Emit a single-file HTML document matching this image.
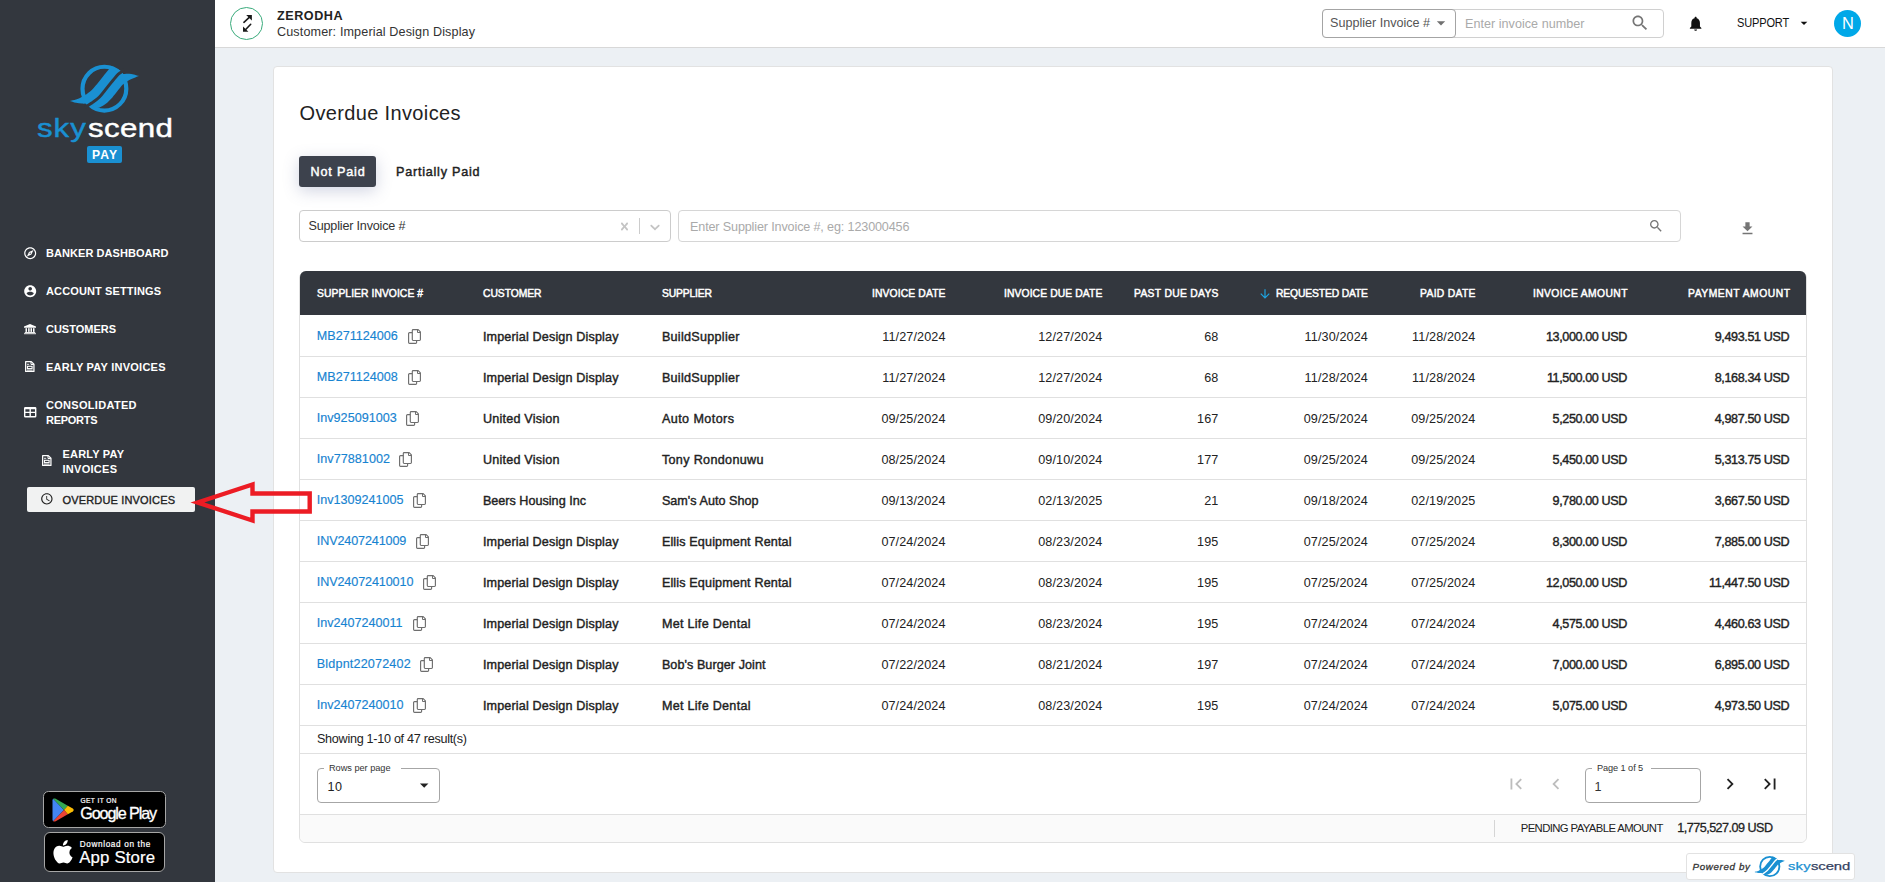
<!DOCTYPE html>
<html lang="en">
<head>
<meta charset="utf-8">
<title>Overdue Invoices</title>
<style>
html,body{margin:0;padding:0;background:#fff;}
body{width:1888px;height:882px;overflow:hidden;position:relative;font-family:"Liberation Sans",sans-serif;}
#app{position:absolute;left:0;top:0;width:1888px;height:882px;overflow:hidden;}
.r{position:absolute;box-sizing:border-box;}
.t{position:absolute;white-space:pre;font-family:"Liberation Sans",sans-serif;}
svg{position:absolute;overflow:visible;}
</style>
</head>
<body>
<div id="app">
<div class="r" style="left:215px;top:48px;width:1670px;height:834px;background:#ecf0f4;"></div>
<div class="r" style="left:215px;top:0px;width:1670px;height:48px;background:#fff;border-bottom:1px solid #d8d8d8;"></div>
<div class="r" style="left:0px;top:0px;width:215px;height:882px;background:#33373e;"></div>
<div class="r" style="left:273px;top:66px;width:1560px;height:807px;background:#fff;border:1px solid #e2e2e2;border-radius:4px;"></div>
<div class="r" style="left:230.1px;top:7px;width:33px;height:33px;border:1.600px solid #3aab7c;border-radius:50%;"></div>
<svg style="left:226px;top:3px;" width="40" height="40" viewBox="226 3 40 40"><g fill="#1a1a1a" stroke="none"><path d="M246.2 15H251.85V20.5Z"/><path d="M243 26.600V31.800H248.400Z"/></g><g stroke="#1a1a1a" stroke-width="1.600" fill="none" stroke-linecap="round"><path d="M243.900 22.300L249.800 16.900"/><path d="M250.700 24.300L245.200 30"/></g></svg>
<div class="r" style="left:1322px;top:9px;width:342px;height:29px;border:1px solid #d0d0d0;border-radius:4px;background:#fff;"></div>
<div class="r" style="left:1322px;top:9px;width:134px;height:29px;border:1px solid #a4a4a4;border-radius:4px;background:#fff;"></div>
<svg style="left:1431.2px;top:12.6px;" width="20" height="20" viewBox="0 0 24 24"><path d="M7 10l5 5 5-5z" fill="#707070"/></svg>
<svg style="left:1630px;top:13px;" width="20" height="20" viewBox="0 0 24 24"><path d="M15.5 14h-.79l-.28-.27C15.41 12.59 16 11.11 16 9.5 16 5.91 13.09 3 9.5 3S3 5.91 3 9.5 5.91 16 9.5 16c1.61 0 3.09-.59 4.23-1.57l.27.28v.79l5 4.99L20.49 19l-4.99-5zm-6 0C7.01 14 5 11.99 5 9.5S7.01 5 9.5 5 14 7.01 14 9.5 11.99 14 9.5 14z" fill="#757575"/></svg>
<svg style="left:1686.7px;top:14.9px;" width="17.25" height="17.25" viewBox="0 0 24 24"><path d="M12 22c1.1 0 2-.9 2-2h-4c0 1.1.89 2 2 2zm6-6v-5c0-3.07-1.64-5.64-4.5-6.32V4c0-.83-.67-1.5-1.5-1.5s-1.5.67-1.5 1.5v.68C7.63 5.36 6 7.92 6 11v5l-2 2v1h16v-1l-2-2z" fill="#111"/></svg>
<svg style="left:1796.3px;top:15.3px;" width="16" height="16" viewBox="0 0 24 24"><path d="M7 10l5 5 5-5z" fill="#111"/></svg>
<div class="r" style="left:1834px;top:9.5px;width:27px;height:27px;background:#00a8e8;border-radius:50%;"></div>
<svg style="left:64px;top:58px;" width="80" height="60" viewBox="64 58 80 60"><circle cx="104.4" cy="88.63" r="21.9" fill="none" stroke="#1a90d2" stroke-width="4.2"/><path d="M69.80,101.00C70.83,100.77 74.30,100.12 76.00,99.60C77.70,99.08 78.82,98.47 80.00,97.90C81.18,97.33 82.20,96.68 83.10,96.20C84.00,95.72 84.47,95.60 85.40,95.00C86.33,94.40 87.32,93.78 88.70,92.60C90.08,91.42 91.73,90.05 93.70,87.90C95.67,85.75 98.58,82.05 100.50,79.70C102.42,77.35 103.83,75.50 105.20,73.80C106.57,72.10 108.12,70.22 108.70,69.50L110.5,65.8L121.2,71L120.80,72.30C120.13,72.84 118.07,74.32 116.80,75.55C115.53,76.78 114.85,77.64 113.20,79.70C111.55,81.76 109.20,84.95 106.90,87.90C104.60,90.85 101.72,95.12 99.40,97.40C97.08,99.68 94.93,100.62 93.00,101.60C91.07,102.58 89.65,102.97 87.80,103.30C85.95,103.63 83.87,103.68 81.90,103.60C79.93,103.52 78.02,103.23 76.00,102.80C73.98,102.37 70.83,101.30 69.80,101.00Z" fill="#1a90d2"/><path d="M138.90,75.90C138.42,75.78 137.25,75.50 136.00,75.20C134.75,74.90 132.85,74.35 131.40,74.10C129.95,73.85 128.68,73.72 127.30,73.70C125.92,73.68 123.80,73.95 123.10,74.00L120.80,72.30C120.13,72.84 118.07,74.32 116.80,75.55C115.53,76.78 114.85,77.64 113.20,79.70C111.55,81.76 109.20,84.95 106.90,87.90C104.60,90.85 102.00,94.85 99.40,97.40C96.80,99.95 92.65,102.23 91.30,103.20L95,108L99.00,107.70C99.58,107.40 101.13,106.73 102.50,105.90C103.87,105.07 105.72,103.93 107.20,102.70C108.68,101.47 110.22,99.78 111.40,98.50C112.58,97.22 112.88,96.77 114.30,95.00C115.72,93.23 118.43,89.70 119.90,87.90C121.37,86.10 122.03,85.20 123.10,84.20C124.17,83.20 125.27,82.60 126.30,81.90C127.33,81.20 128.02,80.67 129.30,80.00C130.58,79.33 132.40,78.58 134.00,77.90C135.60,77.22 138.08,76.23 138.90,75.90Z" fill="#1a90d2"/><path d="M124.20,69.60C123.63,70.05 122.03,71.28 120.80,72.30C119.57,73.32 119.12,73.10 116.80,75.70C114.48,78.30 109.83,84.30 106.90,87.90C103.97,91.50 101.80,94.73 99.20,97.30C96.60,99.87 93.70,101.62 91.30,103.30C88.90,104.98 85.88,106.72 84.80,107.40" fill="none" stroke="#33373e" stroke-width="3"/></svg>
<div class="r" style="left:87px;top:146px;width:35px;height:17px;background:#1a90d2;border-radius:2px;"></div>
<div class="r" style="left:27px;top:487px;width:168px;height:25px;background:#f1f2f2;border-radius:2px;"></div>
<svg style="left:22.8px;top:245.5px;" width="14.4" height="14.4" viewBox="0 0 24 24"><path d="M12 2C6.48 2 2 6.48 2 12s4.48 10 10 10 10-4.48 10-10S17.52 2 12 2zm0 18c-4.41 0-8-3.59-8-8s3.59-8 8-8 8 3.59 8 8-3.59 8-8 8zm-5.500-2.500l7.510-3.490L17.500 6.500 9.990 9.990 6.500 17.500zm5.500-6.600c.61 0 1.100.49 1.100 1.100s-.49 1.100-1.100 1.100-1.100-.49-1.100-1.100.49-1.100 1.100-1.100z" fill="#fff"/></svg>
<svg style="left:22.8px;top:283.6px;" width="14.4" height="14.4" viewBox="0 0 24 24"><path d="M12 2C6.48 2 2 6.48 2 12s4.48 10 10 10 10-4.48 10-10S17.52 2 12 2zm0 3c1.66 0 3 1.34 3 3s-1.34 3-3 3-3-1.34-3-3 1.34-3 3-3zm0 14.200c-2.500 0-4.710-1.280-6-3.220.03-1.990 4-3.080 6-3.080 1.990 0 5.970 1.090 6 3.080-1.290 1.940-3.500 3.220-6 3.220z" fill="#fff"/></svg>
<svg style="left:23.75px;top:323.9px;" width="12" height="10.2" viewBox="0 0 12 10.200"><g fill="#fff"><path d="M6 0L12 2.500V3.700H0V2.500Z"/><rect x="1.500" y="4.200" width="1.500" height="3.700"/><rect x="4.100" y="4.200" width="1.500" height="3.700"/><rect x="6.500" y="4.200" width="1.500" height="3.700"/><rect x="9" y="4.200" width="1.500" height="3.700"/><rect x=".8" y="8.100" width="10.400" height="1"/><rect x="0" y="9.300" width="12" height=".9"/></g></svg>
<svg style="left:24.8px;top:360.9px;" width="9.6" height="11.1" viewBox="0 0 9.600 11.100"><g fill="none" stroke="#fff" stroke-width="1.250"><path d="M.65 .65H6.300L8.950 3.300V10.450H.65Z" stroke-linejoin="round"/><path d="M6 .8V3.500H8.800" stroke-width="1"/><rect x="2.500" y="5.300" width="4.600" height="2.300" stroke-width="1.100"/><path d="M2 3.300H4.200M2 9.100H7.600" stroke-width=".9"/></g></svg>
<svg style="left:23.75px;top:406.9px;" width="12.4" height="10.5" viewBox="0 0 12.400 10.500"><path fill-rule="evenodd" fill="#fff" d="M1.300 0H11.100A1.300 1.300 0 0 1 12.400 1.300V9.200A1.300 1.300 0 0 1 11.100 10.500H1.300A1.300 1.300 0 0 1 0 9.200V1.300A1.300 1.300 0 0 1 1.300 0ZM1.400 2.200V4.700H5.500V2.200ZM6.900 2.200V4.700H11V2.200ZM1.400 6.100V8.900H5.500V6.100ZM6.900 6.100V8.900H11V6.100Z"/></svg>
<svg style="left:41.9px;top:455px;" width="9.6" height="11.1" viewBox="0 0 9.600 11.100"><g fill="none" stroke="#fff" stroke-width="1.250"><path d="M.65 .65H6.300L8.950 3.300V10.450H.65Z" stroke-linejoin="round"/><path d="M6 .8V3.500H8.800" stroke-width="1"/><rect x="2.500" y="5.300" width="4.600" height="2.300" stroke-width="1.100"/><path d="M2 3.300H4.200M2 9.100H7.600" stroke-width=".9"/></g></svg>
<svg style="left:39.85px;top:492.35px;" width="13.7" height="13.7" viewBox="0 0 24 24"><path d="M11.990 2C6.470 2 2 6.480 2 12s4.470 10 9.990 10C17.520 22 22 17.520 22 12S17.520 2 11.990 2zM12 20c-4.420 0-8-3.580-8-8s3.580-8 8-8 8 3.580 8 8-3.580 8-8 8zm.5-13H11v6l5.250 3.150.75-1.230-4.500-2.670z" fill="#222"/></svg>
<div class="r" style="left:43px;top:791px;width:123px;height:37px;background:#000;border:1px solid #a6a6a6;border-radius:5.5px;"></div>
<svg style="left:51.5px;top:797.5px;" width="22" height="24" viewBox="0 0 22 24"><path d="M1.200 0.800 L12 12 L1.200 23.200 C0.700 22.800 0.500 22.200 0.500 21.500 V2.500 C0.500 1.800 0.700 1.200 1.200 0.800Z" fill="#4285f4"/><path d="M1.200 0.800 C1.900 0.300 2.800 0.300 3.700 0.800 L15.800 7.800 L12 12Z" fill="#34a853"/><path d="M15.800 7.800 L20.800 10.600 C22 11.300 22 12.700 20.800 13.400 L15.800 16.200 L12 12Z" fill="#fbbc04"/><path d="M1.200 23.200 C1.900 23.700 2.800 23.700 3.700 23.200 L15.800 16.200 L12 12Z" fill="#ea4335"/></svg>
<div class="r" style="left:44px;top:832px;width:121px;height:40px;background:#000;border:1px solid #a6a6a6;border-radius:6px;"></div>
<svg style="left:52.8px;top:840.2px;" width="20.5" height="23.5" viewBox="2.500 0 19.500 24"><path d="M12.152 6.896c-.948 0-2.415-1.078-3.960-1.040-2.040.027-3.910 1.183-4.961 3.014-2.117 3.675-.546 9.103 1.519 12.090 1.013 1.454 2.208 3.090 3.792 3.039 1.520-.065 2.090-.987 3.935-.987 1.831 0 2.350.987 3.960.948 1.637-.026 2.676-1.480 3.676-2.948 1.156-1.688 1.636-3.325 1.662-3.415-.039-.013-3.182-1.221-3.220-4.857-.026-3.040 2.480-4.494 2.597-4.559-1.429-2.090-3.623-2.324-4.390-2.376-2-.156-3.675 1.090-4.610 1.090zM15.530 3.830c.843-1.012 1.400-2.427 1.245-3.830-1.207.052-2.662.805-3.532 1.818-.78.896-1.454 2.338-1.273 3.714 1.338.104 2.715-.688 3.559-1.701" fill="#fff"/></svg>
<div class="r" style="left:299px;top:156px;width:77px;height:31px;background:#3d424d;border-radius:3px;box-shadow:0 4px 16px rgba(90,100,150,.28);"></div>
<div class="r" style="left:299px;top:210px;width:372px;height:32px;border:1px solid #ccc;border-radius:4px;background:#fff;"></div>
<svg style="left:617px;top:219px;" width="15" height="15" viewBox="0 0 20 20"><path d="M14.348 14.849c-0.469 0.469-1.229 0.469-1.697 0l-2.651-3.030-2.651 3.029c-0.469 0.469-1.229 0.469-1.697 0-0.469-0.469-0.469-1.229 0-1.697l2.758-3.150-2.759-3.152c-0.469-0.469-0.469-1.228 0-1.697s1.228-0.469 1.697 0l2.652 3.031 2.651-3.031c0.469-0.469 1.228-0.469 1.697 0s0.469 1.229 0 1.697l-2.758 3.152 2.758 3.150c0.469 0.469 0.469 1.229 0 1.698z" fill="#c4c4c4"/></svg>
<div class="r" style="left:639px;top:217.5px;width:1px;height:16px;background:#ccc;"></div>
<svg style="left:647.2px;top:219px;" width="16" height="16" viewBox="0 0 20 20"><path d="M4.516 7.548c0.436-0.446 1.043-0.481 1.576 0l3.908 3.747 3.908-3.747c0.533-0.481 1.141-0.446 1.574 0 0.436 0.445 0.408 1.197 0 1.615-0.406 0.418-4.695 4.502-4.695 4.502-0.217 0.223-0.502 0.335-0.787 0.335s-0.570-0.112-0.789-0.335c0 0-4.287-4.084-4.695-4.502s-0.436-1.170 0-1.615z" fill="#c4c4c4"/></svg>
<div class="r" style="left:678px;top:210px;width:1003px;height:32px;border:1px solid #d6d6d6;border-radius:4px;background:#fff;"></div>
<svg style="left:1648px;top:218px;" width="16" height="16" viewBox="0 0 24 24"><path d="M15.5 14h-.79l-.28-.27C15.41 12.59 16 11.11 16 9.5 16 5.91 13.09 3 9.5 3S3 5.91 3 9.5 5.91 16 9.5 16c1.61 0 3.09-.59 4.23-1.57l.27.28v.79l5 4.99L20.49 19l-4.99-5zm-6 0C7.01 14 5 11.99 5 9.5S7.01 5 9.5 5 14 7.01 14 9.5 11.99 14 9.5 14z" fill="#757575"/></svg>
<svg style="left:1739px;top:219.5px;" width="17" height="17" viewBox="0 0 24 24"><path d="M19 9h-4V3H9v6H5l7 7 7-7zM5 18v2h14v-2H5z" fill="#757575"/></svg>
<div class="r" style="left:299px;top:271px;width:1508px;height:572px;border:1px solid #e0e0e0;border-radius:7px 7px 6px 6px;background:#fff;"></div>
<div class="r" style="left:300px;top:271px;width:1506px;height:44px;background:#33373e;border-radius:6px 6px 0 0;"></div>
<svg style="left:1257.5px;top:286.5px;" width="14" height="14" viewBox="0 0 24 24"><path d="M20 12l-1.410-1.410L13 16.170V4h-2v12.170l-5.580-5.590L4 12l8 8 8-8z" fill="#1ea4e0"/></svg>
<svg style="left:408px;top:329.0px;" width="13" height="15" viewBox="0 0 13 15"><g fill="none" stroke="#6e6e6e" stroke-width="1.150" stroke-linejoin="round"><path d="M5.200 .6H10.200L12.400 2.800V10.600A.9 .9 0 0 1 11.500 11.500H5.200A.9 .9 0 0 1 4.300 10.600V1.500A.9 .9 0 0 1 5.200 .6Z"/><path d="M9.500 .9V3.500H12.200" stroke-width="1"/><path d="M4.300 3.600H1.500A.9 .9 0 0 0 .6 4.500V13.400A.9 .9 0 0 0 1.500 14.300H7.700A.9 .9 0 0 0 8.600 13.400V11.600"/></g></svg>
<div class="r" style="left:300px;top:356px;width:1506px;height:1px;background:#e0e0e0;"></div>
<svg style="left:408px;top:370.0px;" width="13" height="15" viewBox="0 0 13 15"><g fill="none" stroke="#6e6e6e" stroke-width="1.150" stroke-linejoin="round"><path d="M5.200 .6H10.200L12.400 2.800V10.600A.9 .9 0 0 1 11.500 11.500H5.200A.9 .9 0 0 1 4.300 10.600V1.500A.9 .9 0 0 1 5.200 .6Z"/><path d="M9.500 .9V3.500H12.200" stroke-width="1"/><path d="M4.300 3.600H1.500A.9 .9 0 0 0 .6 4.500V13.400A.9 .9 0 0 0 1.500 14.300H7.700A.9 .9 0 0 0 8.600 13.400V11.600"/></g></svg>
<div class="r" style="left:300px;top:397px;width:1506px;height:1px;background:#e0e0e0;"></div>
<svg style="left:405.8px;top:411.0px;" width="13" height="15" viewBox="0 0 13 15"><g fill="none" stroke="#6e6e6e" stroke-width="1.150" stroke-linejoin="round"><path d="M5.200 .6H10.200L12.400 2.800V10.600A.9 .9 0 0 1 11.500 11.500H5.200A.9 .9 0 0 1 4.300 10.600V1.500A.9 .9 0 0 1 5.200 .6Z"/><path d="M9.500 .9V3.500H12.200" stroke-width="1"/><path d="M4.300 3.600H1.500A.9 .9 0 0 0 .6 4.500V13.400A.9 .9 0 0 0 1.500 14.300H7.700A.9 .9 0 0 0 8.600 13.400V11.600"/></g></svg>
<div class="r" style="left:300px;top:438px;width:1506px;height:1px;background:#e0e0e0;"></div>
<svg style="left:398.9px;top:452.0px;" width="13" height="15" viewBox="0 0 13 15"><g fill="none" stroke="#6e6e6e" stroke-width="1.150" stroke-linejoin="round"><path d="M5.200 .6H10.200L12.400 2.800V10.600A.9 .9 0 0 1 11.500 11.500H5.200A.9 .9 0 0 1 4.300 10.600V1.500A.9 .9 0 0 1 5.200 .6Z"/><path d="M9.500 .9V3.500H12.200" stroke-width="1"/><path d="M4.300 3.600H1.500A.9 .9 0 0 0 .6 4.500V13.400A.9 .9 0 0 0 1.500 14.300H7.700A.9 .9 0 0 0 8.600 13.400V11.600"/></g></svg>
<div class="r" style="left:300px;top:479px;width:1506px;height:1px;background:#e0e0e0;"></div>
<svg style="left:413px;top:493.0px;" width="13" height="15" viewBox="0 0 13 15"><g fill="none" stroke="#6e6e6e" stroke-width="1.150" stroke-linejoin="round"><path d="M5.200 .6H10.200L12.400 2.800V10.600A.9 .9 0 0 1 11.500 11.500H5.200A.9 .9 0 0 1 4.300 10.600V1.500A.9 .9 0 0 1 5.200 .6Z"/><path d="M9.500 .9V3.500H12.200" stroke-width="1"/><path d="M4.300 3.600H1.500A.9 .9 0 0 0 .6 4.500V13.400A.9 .9 0 0 0 1.500 14.300H7.700A.9 .9 0 0 0 8.600 13.400V11.600"/></g></svg>
<div class="r" style="left:300px;top:520px;width:1506px;height:1px;background:#e0e0e0;"></div>
<svg style="left:415.9px;top:534.0px;" width="13" height="15" viewBox="0 0 13 15"><g fill="none" stroke="#6e6e6e" stroke-width="1.150" stroke-linejoin="round"><path d="M5.200 .6H10.200L12.400 2.800V10.600A.9 .9 0 0 1 11.500 11.500H5.200A.9 .9 0 0 1 4.300 10.600V1.500A.9 .9 0 0 1 5.200 .6Z"/><path d="M9.500 .9V3.500H12.200" stroke-width="1"/><path d="M4.300 3.600H1.500A.9 .9 0 0 0 .6 4.500V13.400A.9 .9 0 0 0 1.500 14.300H7.700A.9 .9 0 0 0 8.600 13.400V11.600"/></g></svg>
<div class="r" style="left:300px;top:561px;width:1506px;height:1px;background:#e0e0e0;"></div>
<svg style="left:422.8px;top:575.0px;" width="13" height="15" viewBox="0 0 13 15"><g fill="none" stroke="#6e6e6e" stroke-width="1.150" stroke-linejoin="round"><path d="M5.200 .6H10.200L12.400 2.800V10.600A.9 .9 0 0 1 11.500 11.500H5.200A.9 .9 0 0 1 4.300 10.600V1.500A.9 .9 0 0 1 5.200 .6Z"/><path d="M9.500 .9V3.500H12.200" stroke-width="1"/><path d="M4.300 3.600H1.500A.9 .9 0 0 0 .6 4.500V13.400A.9 .9 0 0 0 1.500 14.300H7.700A.9 .9 0 0 0 8.600 13.400V11.600"/></g></svg>
<div class="r" style="left:300px;top:602px;width:1506px;height:1px;background:#e0e0e0;"></div>
<svg style="left:413px;top:616.0px;" width="13" height="15" viewBox="0 0 13 15"><g fill="none" stroke="#6e6e6e" stroke-width="1.150" stroke-linejoin="round"><path d="M5.200 .6H10.200L12.400 2.800V10.600A.9 .9 0 0 1 11.500 11.500H5.200A.9 .9 0 0 1 4.300 10.600V1.500A.9 .9 0 0 1 5.200 .6Z"/><path d="M9.500 .9V3.500H12.200" stroke-width="1"/><path d="M4.300 3.600H1.500A.9 .9 0 0 0 .6 4.500V13.400A.9 .9 0 0 0 1.500 14.300H7.700A.9 .9 0 0 0 8.600 13.400V11.600"/></g></svg>
<div class="r" style="left:300px;top:643px;width:1506px;height:1px;background:#e0e0e0;"></div>
<svg style="left:419.9px;top:657.0px;" width="13" height="15" viewBox="0 0 13 15"><g fill="none" stroke="#6e6e6e" stroke-width="1.150" stroke-linejoin="round"><path d="M5.200 .6H10.200L12.400 2.800V10.600A.9 .9 0 0 1 11.500 11.500H5.200A.9 .9 0 0 1 4.300 10.600V1.500A.9 .9 0 0 1 5.200 .6Z"/><path d="M9.500 .9V3.500H12.200" stroke-width="1"/><path d="M4.300 3.600H1.500A.9 .9 0 0 0 .6 4.500V13.400A.9 .9 0 0 0 1.500 14.300H7.700A.9 .9 0 0 0 8.600 13.400V11.600"/></g></svg>
<div class="r" style="left:300px;top:684px;width:1506px;height:1px;background:#e0e0e0;"></div>
<svg style="left:413px;top:698.0px;" width="13" height="15" viewBox="0 0 13 15"><g fill="none" stroke="#6e6e6e" stroke-width="1.150" stroke-linejoin="round"><path d="M5.200 .6H10.200L12.400 2.800V10.600A.9 .9 0 0 1 11.500 11.500H5.200A.9 .9 0 0 1 4.300 10.600V1.500A.9 .9 0 0 1 5.200 .6Z"/><path d="M9.500 .9V3.500H12.200" stroke-width="1"/><path d="M4.300 3.600H1.500A.9 .9 0 0 0 .6 4.500V13.400A.9 .9 0 0 0 1.500 14.300H7.700A.9 .9 0 0 0 8.600 13.400V11.600"/></g></svg>
<div class="r" style="left:300px;top:725px;width:1506px;height:1px;background:#e0e0e0;"></div>
<div class="r" style="left:300px;top:753px;width:1506px;height:1px;background:#e0e0e0;"></div>
<div class="r" style="left:317px;top:768px;width:123px;height:35px;border:1px solid #a6a6a6;border-radius:4px;"></div>
<div class="r" style="left:324px;top:766px;width:77px;height:5px;background:#fff;"></div>
<svg style="left:413.75px;top:775.4px;" width="20.4" height="20.4" viewBox="0 0 24 24"><path d="M7 10l5 5 5-5z" fill="#222"/></svg>
<svg style="left:1505.2px;top:773.2px;" width="22" height="22" viewBox="0 0 24 24"><path d="M18.410 16.590L13.820 12l4.590-4.590L17 6l-6 6 6 6zM6 6h2v12H6z" fill="#bdbdbd"/></svg>
<svg style="left:1545px;top:773.2px;" width="22" height="22" viewBox="0 0 24 24"><path d="M15.410 7.410L14 6l-6 6 6 6 1.410-1.410L10.830 12z" fill="#bdbdbd"/></svg>
<div class="r" style="left:1585px;top:768px;width:116px;height:35px;border:1px solid #a6a6a6;border-radius:4px;"></div>
<div class="r" style="left:1592px;top:766px;width:59px;height:5px;background:#fff;"></div>
<svg style="left:1719px;top:773.2px;" width="22" height="22" viewBox="0 0 24 24"><path d="M10 6L8.590 7.410 13.170 12l-4.580 4.590L10 18l6-6z" fill="#222"/></svg>
<svg style="left:1759px;top:773.2px;" width="22" height="22" viewBox="0 0 24 24"><path d="M5.590 7.410L10.180 12l-4.590 4.590L7 18l6-6-6-6zM16 6h2v12h-2z" fill="#222"/></svg>
<div class="r" style="left:300px;top:814px;width:1506px;height:28px;background:#fafafa;border-top:1px solid #e0e0e0;border-radius:0 0 6px 6px;"></div>
<div class="r" style="left:1494px;top:820px;width:1px;height:17px;background:#d5d5d5;"></div>
<div class="r" style="left:1685.7px;top:853px;width:169.3px;height:27px;background:#fff;border:1px solid #e2e2e2;border-radius:3px;"></div>
<svg style="left:1752.45px;top:852.7px;" width="35.2" height="26.4" viewBox="64 58 80 60"><circle cx="104.4" cy="88.63" r="21.9" fill="none" stroke="#1a90d2" stroke-width="4.2"/><path d="M69.80,101.00C70.83,100.77 74.30,100.12 76.00,99.60C77.70,99.08 78.82,98.47 80.00,97.90C81.18,97.33 82.20,96.68 83.10,96.20C84.00,95.72 84.47,95.60 85.40,95.00C86.33,94.40 87.32,93.78 88.70,92.60C90.08,91.42 91.73,90.05 93.70,87.90C95.67,85.75 98.58,82.05 100.50,79.70C102.42,77.35 103.83,75.50 105.20,73.80C106.57,72.10 108.12,70.22 108.70,69.50L110.5,65.8L121.2,71L120.80,72.30C120.13,72.84 118.07,74.32 116.80,75.55C115.53,76.78 114.85,77.64 113.20,79.70C111.55,81.76 109.20,84.95 106.90,87.90C104.60,90.85 101.72,95.12 99.40,97.40C97.08,99.68 94.93,100.62 93.00,101.60C91.07,102.58 89.65,102.97 87.80,103.30C85.95,103.63 83.87,103.68 81.90,103.60C79.93,103.52 78.02,103.23 76.00,102.80C73.98,102.37 70.83,101.30 69.80,101.00Z" fill="#1a90d2"/><path d="M138.90,75.90C138.42,75.78 137.25,75.50 136.00,75.20C134.75,74.90 132.85,74.35 131.40,74.10C129.95,73.85 128.68,73.72 127.30,73.70C125.92,73.68 123.80,73.95 123.10,74.00L120.80,72.30C120.13,72.84 118.07,74.32 116.80,75.55C115.53,76.78 114.85,77.64 113.20,79.70C111.55,81.76 109.20,84.95 106.90,87.90C104.60,90.85 102.00,94.85 99.40,97.40C96.80,99.95 92.65,102.23 91.30,103.20L95,108L99.00,107.70C99.58,107.40 101.13,106.73 102.50,105.90C103.87,105.07 105.72,103.93 107.20,102.70C108.68,101.47 110.22,99.78 111.40,98.50C112.58,97.22 112.88,96.77 114.30,95.00C115.72,93.23 118.43,89.70 119.90,87.90C121.37,86.10 122.03,85.20 123.10,84.20C124.17,83.20 125.27,82.60 126.30,81.90C127.33,81.20 128.02,80.67 129.30,80.00C130.58,79.33 132.40,78.58 134.00,77.90C135.60,77.22 138.08,76.23 138.90,75.90Z" fill="#1a90d2"/><path d="M124.20,69.60C123.63,70.05 122.03,71.28 120.80,72.30C119.57,73.32 119.12,73.10 116.80,75.70C114.48,78.30 109.83,84.30 106.90,87.90C103.97,91.50 101.80,94.73 99.20,97.30C96.60,99.87 93.70,101.62 91.30,103.30C88.90,104.98 85.88,106.72 84.80,107.40" fill="none" stroke="#fff" stroke-width="3"/></svg>
<svg style="left:190px;top:475px;" width="130" height="55" viewBox="190 475 130 55"><path d="M197.5 502.5L252.500 484.500V493.500H309.700V511.500H252.500V520.500Z" fill="none" stroke="#ec1c24" stroke-width="4.400" stroke-linejoin="miter"/></svg>
<span class="t" style="left:277.00px;top:9px;font-size:12.6px;line-height:14px;height:14px;color:#222;font-weight:700;letter-spacing:0.553px;">ZERODHA</span>
<span class="t" style="left:277.00px;top:25px;font-size:12.6px;line-height:14px;height:14px;color:#333;letter-spacing:0.129px;">Customer: Imperial Design Display</span>
<span class="t" style="left:1330.00px;top:16px;font-size:12.6px;line-height:14px;height:14px;color:#555;letter-spacing:-0.007px;">Supplier Invoice #</span>
<span class="t" style="left:1465.00px;top:17px;font-size:12.6px;line-height:14px;height:14px;color:#aaa;letter-spacing:0.025px;">Enter invoice number</span>
<span class="t" style="left:1736.60px;top:16px;font-size:12px;line-height:14px;height:14px;color:#111;letter-spacing:-0.176px;transform:scaleX(0.92);transform-origin:0 50%;">SUPPORT</span>
<span class="t" style="left:1842.10px;top:14px;font-size:16.4px;line-height:18px;height:18px;color:#fff;">N</span>
<span class="t" style="left:37.30px;top:114px;font-size:25.6px;line-height:28px;height:28px;color:#1a90d2;letter-spacing:0.805px;-webkit-text-stroke:0.45px #1a90d2;transform:scaleX(1.22);transform-origin:0 50%;">sky</span>
<span class="t" style="left:88.10px;top:114px;font-size:25.6px;line-height:28px;height:28px;color:#fff;letter-spacing:0.303px;-webkit-text-stroke:0.45px #fff;transform:scaleX(1.22);transform-origin:0 50%;">scend</span>
<span class="t" style="left:92.20px;top:148px;font-size:11.9px;line-height:14px;height:14px;color:#fff;font-weight:700;letter-spacing:1.111px;transform:scaleX(1.02);transform-origin:0 50%;">PAY</span>
<span class="t" style="left:46.00px;top:247px;font-size:11px;line-height:12px;height:12px;color:#fff;font-weight:700;letter-spacing:0.058px;">BANKER DASHBOARD</span>
<span class="t" style="left:46.00px;top:285px;font-size:11px;line-height:12px;height:12px;color:#fff;font-weight:700;letter-spacing:0.129px;">ACCOUNT SETTINGS</span>
<span class="t" style="left:46.00px;top:323px;font-size:11px;line-height:12px;height:12px;color:#fff;font-weight:700;letter-spacing:-0.012px;">CUSTOMERS</span>
<span class="t" style="left:46.00px;top:361px;font-size:11px;line-height:12px;height:12px;color:#fff;font-weight:700;letter-spacing:0.244px;">EARLY PAY INVOICES</span>
<span class="t" style="left:46.00px;top:399px;font-size:11px;line-height:12px;height:12px;color:#fff;font-weight:700;letter-spacing:0.301px;">CONSOLIDATED</span>
<span class="t" style="left:46.00px;top:414px;font-size:11px;line-height:12px;height:12px;color:#fff;font-weight:700;letter-spacing:-0.281px;">REPORTS</span>
<span class="t" style="left:62.50px;top:448px;font-size:11px;line-height:12px;height:12px;color:#fff;font-weight:700;letter-spacing:0.197px;">EARLY PAY</span>
<span class="t" style="left:62.50px;top:463px;font-size:11px;line-height:12px;height:12px;color:#fff;font-weight:700;letter-spacing:0.275px;">INVOICES</span>
<span class="t" style="left:62.50px;top:494px;font-size:11px;line-height:12px;height:12px;color:#222;letter-spacing:0.165px;-webkit-text-stroke:0.35px #222;">OVERDUE INVOICES</span>
<span class="t" style="left:80.50px;top:797px;font-size:6.6px;line-height:7px;height:7px;color:#fff;letter-spacing:0.408px;-webkit-text-stroke:0.2px #fff;">GET IT ON</span>
<span class="t" style="left:80.20px;top:804px;font-size:16.2px;line-height:18px;height:18px;color:#fff;letter-spacing:-1.119px;-webkit-text-stroke:0.3px #fff;">Google Play</span>
<span class="t" style="left:79.70px;top:840px;font-size:8.2px;line-height:9px;height:9px;color:#fff;letter-spacing:0.646px;-webkit-text-stroke:0.2px #fff;">Download on the</span>
<span class="t" style="left:79.20px;top:848px;font-size:16.8px;line-height:19px;height:19px;color:#fff;letter-spacing:0.170px;-webkit-text-stroke:0.2px #fff;">App Store</span>
<span class="t" style="left:299.50px;top:102px;font-size:20px;line-height:22px;height:22px;color:#222;letter-spacing:0.357px;">Overdue Invoices</span>
<span class="t" style="left:310.50px;top:165px;font-size:12.6px;line-height:14px;height:14px;color:#fff;letter-spacing:0.841px;-webkit-text-stroke:0.45px #fff;">Not Paid</span>
<span class="t" style="left:396.00px;top:165px;font-size:12.6px;line-height:14px;height:14px;color:#222;letter-spacing:0.769px;-webkit-text-stroke:0.45px #222;">Partially Paid</span>
<span class="t" style="left:308.50px;top:219px;font-size:12.6px;line-height:14px;height:14px;color:#333;letter-spacing:-0.184px;">Supplier Invoice #</span>
<span class="t" style="left:690.00px;top:220px;font-size:12.6px;line-height:14px;height:14px;color:#aaa;letter-spacing:-0.139px;">Enter Supplier Invoice #, eg: 123000456</span>
<span class="t" style="left:317.00px;top:287px;font-size:11.1px;line-height:12px;height:12px;color:#fff;letter-spacing:0.068px;-webkit-text-stroke:0.5px #fff;transform:scaleX(0.93);transform-origin:0 50%;">SUPPLIER INVOICE #</span>
<span class="t" style="left:483.00px;top:287px;font-size:11.1px;line-height:12px;height:12px;color:#fff;letter-spacing:-0.054px;-webkit-text-stroke:0.5px #fff;transform:scaleX(0.93);transform-origin:0 50%;">CUSTOMER</span>
<span class="t" style="left:662.20px;top:287px;font-size:11.1px;line-height:12px;height:12px;color:#fff;letter-spacing:-0.159px;-webkit-text-stroke:0.5px #fff;transform:scaleX(0.93);transform-origin:0 50%;">SUPPLIER</span>
<span class="t" style="left:871.70px;top:287px;font-size:11.1px;line-height:12px;height:12px;color:#fff;letter-spacing:0.142px;-webkit-text-stroke:0.5px #fff;transform:scaleX(0.93);transform-origin:0 50%;">INVOICE DATE</span>
<span class="t" style="left:1003.70px;top:287px;font-size:11.1px;line-height:12px;height:12px;color:#fff;letter-spacing:0.115px;-webkit-text-stroke:0.5px #fff;transform:scaleX(0.93);transform-origin:0 50%;">INVOICE DUE DATE</span>
<span class="t" style="left:1133.50px;top:287px;font-size:11.1px;line-height:12px;height:12px;color:#fff;letter-spacing:0.327px;-webkit-text-stroke:0.5px #fff;transform:scaleX(0.93);transform-origin:0 50%;">PAST DUE DAYS</span>
<span class="t" style="left:1275.50px;top:287px;font-size:11.1px;line-height:12px;height:12px;color:#fff;letter-spacing:-0.151px;-webkit-text-stroke:0.5px #fff;transform:scaleX(0.93);transform-origin:0 50%;">REQUESTED DATE</span>
<span class="t" style="left:1419.50px;top:287px;font-size:11.1px;line-height:12px;height:12px;color:#fff;letter-spacing:0.344px;-webkit-text-stroke:0.5px #fff;transform:scaleX(0.93);transform-origin:0 50%;">PAID DATE</span>
<span class="t" style="left:1532.50px;top:287px;font-size:11.1px;line-height:12px;height:12px;color:#fff;letter-spacing:0.420px;-webkit-text-stroke:0.5px #fff;transform:scaleX(0.93);transform-origin:0 50%;">INVOICE AMOUNT</span>
<span class="t" style="left:1687.50px;top:287px;font-size:11.1px;line-height:12px;height:12px;color:#fff;letter-spacing:0.565px;-webkit-text-stroke:0.5px #fff;transform:scaleX(0.93);transform-origin:0 50%;">PAYMENT AMOUNT</span>
<span class="t" style="left:316.80px;top:329px;font-size:12.6px;line-height:14px;height:14px;color:#1783d1;letter-spacing:-0.010px;-webkit-text-stroke:0.15px #1783d1;">MB271124006</span>
<span class="t" style="left:482.90px;top:330px;font-size:12.6px;line-height:14px;height:14px;color:#222;letter-spacing:0.150px;-webkit-text-stroke:0.4px #222;">Imperial Design Display</span>
<span class="t" style="left:661.90px;top:330px;font-size:12.6px;line-height:14px;height:14px;color:#222;letter-spacing:0.282px;-webkit-text-stroke:0.4px #222;">BuildSupplier</span>
<span class="t" style="left:882.31px;top:330px;font-size:12.6px;line-height:14px;height:14px;color:#222;letter-spacing:0.120px;">11/27/2024</span>
<span class="t" style="left:1038.19px;top:330px;font-size:12.6px;line-height:14px;height:14px;color:#222;letter-spacing:0.120px;">12/27/2024</span>
<span class="t" style="left:1204.16px;top:330px;font-size:12.6px;line-height:14px;height:14px;color:#222;letter-spacing:0.120px;">68</span>
<span class="t" style="left:1304.61px;top:330px;font-size:12.6px;line-height:14px;height:14px;color:#222;letter-spacing:0.120px;">11/30/2024</span>
<span class="t" style="left:1412.11px;top:330px;font-size:12.6px;line-height:14px;height:14px;color:#222;letter-spacing:0.120px;">11/28/2024</span>
<span class="t" style="left:1545.97px;top:330px;font-size:12.6px;line-height:14px;height:14px;color:#222;letter-spacing:-0.400px;-webkit-text-stroke:0.4px #222;">13,000.00 USD</span>
<span class="t" style="left:1714.78px;top:330px;font-size:12.6px;line-height:14px;height:14px;color:#222;letter-spacing:-0.400px;-webkit-text-stroke:0.4px #222;">9,493.51 USD</span>
<span class="t" style="left:316.80px;top:370px;font-size:12.6px;line-height:14px;height:14px;color:#1783d1;letter-spacing:-0.010px;-webkit-text-stroke:0.15px #1783d1;">MB271124008</span>
<span class="t" style="left:482.90px;top:371px;font-size:12.6px;line-height:14px;height:14px;color:#222;letter-spacing:0.150px;-webkit-text-stroke:0.4px #222;">Imperial Design Display</span>
<span class="t" style="left:661.90px;top:371px;font-size:12.6px;line-height:14px;height:14px;color:#222;letter-spacing:0.282px;-webkit-text-stroke:0.4px #222;">BuildSupplier</span>
<span class="t" style="left:882.31px;top:371px;font-size:12.6px;line-height:14px;height:14px;color:#222;letter-spacing:0.120px;">11/27/2024</span>
<span class="t" style="left:1038.19px;top:371px;font-size:12.6px;line-height:14px;height:14px;color:#222;letter-spacing:0.120px;">12/27/2024</span>
<span class="t" style="left:1204.16px;top:371px;font-size:12.6px;line-height:14px;height:14px;color:#222;letter-spacing:0.120px;">68</span>
<span class="t" style="left:1304.61px;top:371px;font-size:12.6px;line-height:14px;height:14px;color:#222;letter-spacing:0.120px;">11/28/2024</span>
<span class="t" style="left:1412.11px;top:371px;font-size:12.6px;line-height:14px;height:14px;color:#222;letter-spacing:0.120px;">11/28/2024</span>
<span class="t" style="left:1546.91px;top:371px;font-size:12.6px;line-height:14px;height:14px;color:#222;letter-spacing:-0.400px;-webkit-text-stroke:0.4px #222;">11,500.00 USD</span>
<span class="t" style="left:1714.78px;top:371px;font-size:12.6px;line-height:14px;height:14px;color:#222;letter-spacing:-0.400px;-webkit-text-stroke:0.4px #222;">8,168.34 USD</span>
<span class="t" style="left:316.80px;top:411px;font-size:12.6px;line-height:14px;height:14px;color:#1783d1;letter-spacing:0.005px;-webkit-text-stroke:0.15px #1783d1;">Inv925091003</span>
<span class="t" style="left:482.90px;top:412px;font-size:12.6px;line-height:14px;height:14px;color:#222;letter-spacing:0.218px;-webkit-text-stroke:0.4px #222;">United Vision</span>
<span class="t" style="left:661.90px;top:412px;font-size:12.6px;line-height:14px;height:14px;color:#222;letter-spacing:0.419px;-webkit-text-stroke:0.4px #222;">Auto Motors</span>
<span class="t" style="left:881.39px;top:412px;font-size:12.6px;line-height:14px;height:14px;color:#222;letter-spacing:0.120px;">09/25/2024</span>
<span class="t" style="left:1038.19px;top:412px;font-size:12.6px;line-height:14px;height:14px;color:#222;letter-spacing:0.120px;">09/20/2024</span>
<span class="t" style="left:1197.04px;top:412px;font-size:12.6px;line-height:14px;height:14px;color:#222;letter-spacing:0.120px;">167</span>
<span class="t" style="left:1303.69px;top:412px;font-size:12.6px;line-height:14px;height:14px;color:#222;letter-spacing:0.120px;">09/25/2024</span>
<span class="t" style="left:1411.19px;top:412px;font-size:12.6px;line-height:14px;height:14px;color:#222;letter-spacing:0.120px;">09/25/2024</span>
<span class="t" style="left:1552.58px;top:412px;font-size:12.6px;line-height:14px;height:14px;color:#222;letter-spacing:-0.400px;-webkit-text-stroke:0.4px #222;">5,250.00 USD</span>
<span class="t" style="left:1714.78px;top:412px;font-size:12.6px;line-height:14px;height:14px;color:#222;letter-spacing:-0.400px;-webkit-text-stroke:0.4px #222;">4,987.50 USD</span>
<span class="t" style="left:316.80px;top:452px;font-size:12.6px;line-height:14px;height:14px;color:#1783d1;letter-spacing:0.036px;-webkit-text-stroke:0.15px #1783d1;">Inv77881002</span>
<span class="t" style="left:482.90px;top:453px;font-size:12.6px;line-height:14px;height:14px;color:#222;letter-spacing:0.218px;-webkit-text-stroke:0.4px #222;">United Vision</span>
<span class="t" style="left:661.90px;top:453px;font-size:12.6px;line-height:14px;height:14px;color:#222;letter-spacing:0.329px;-webkit-text-stroke:0.4px #222;">Tony Rondonuwu</span>
<span class="t" style="left:881.39px;top:453px;font-size:12.6px;line-height:14px;height:14px;color:#222;letter-spacing:0.120px;">08/25/2024</span>
<span class="t" style="left:1038.19px;top:453px;font-size:12.6px;line-height:14px;height:14px;color:#222;letter-spacing:0.120px;">09/10/2024</span>
<span class="t" style="left:1197.04px;top:453px;font-size:12.6px;line-height:14px;height:14px;color:#222;letter-spacing:0.120px;">177</span>
<span class="t" style="left:1303.69px;top:453px;font-size:12.6px;line-height:14px;height:14px;color:#222;letter-spacing:0.120px;">09/25/2024</span>
<span class="t" style="left:1411.19px;top:453px;font-size:12.6px;line-height:14px;height:14px;color:#222;letter-spacing:0.120px;">09/25/2024</span>
<span class="t" style="left:1552.58px;top:453px;font-size:12.6px;line-height:14px;height:14px;color:#222;letter-spacing:-0.400px;-webkit-text-stroke:0.4px #222;">5,450.00 USD</span>
<span class="t" style="left:1714.78px;top:453px;font-size:12.6px;line-height:14px;height:14px;color:#222;letter-spacing:-0.400px;-webkit-text-stroke:0.4px #222;">5,313.75 USD</span>
<span class="t" style="left:316.80px;top:493px;font-size:12.6px;line-height:14px;height:14px;color:#1783d1;letter-spacing:-0.020px;-webkit-text-stroke:0.15px #1783d1;">Inv1309241005</span>
<span class="t" style="left:482.90px;top:494px;font-size:12.6px;line-height:14px;height:14px;color:#222;letter-spacing:0.012px;-webkit-text-stroke:0.4px #222;">Beers Housing Inc</span>
<span class="t" style="left:661.90px;top:494px;font-size:12.6px;line-height:14px;height:14px;color:#222;letter-spacing:0.027px;-webkit-text-stroke:0.4px #222;">Sam&#x27;s Auto Shop</span>
<span class="t" style="left:881.39px;top:494px;font-size:12.6px;line-height:14px;height:14px;color:#222;letter-spacing:0.120px;">09/13/2024</span>
<span class="t" style="left:1038.19px;top:494px;font-size:12.6px;line-height:14px;height:14px;color:#222;letter-spacing:0.120px;">02/13/2025</span>
<span class="t" style="left:1204.16px;top:494px;font-size:12.6px;line-height:14px;height:14px;color:#222;letter-spacing:0.120px;">21</span>
<span class="t" style="left:1303.69px;top:494px;font-size:12.6px;line-height:14px;height:14px;color:#222;letter-spacing:0.120px;">09/18/2024</span>
<span class="t" style="left:1411.19px;top:494px;font-size:12.6px;line-height:14px;height:14px;color:#222;letter-spacing:0.120px;">02/19/2025</span>
<span class="t" style="left:1552.58px;top:494px;font-size:12.6px;line-height:14px;height:14px;color:#222;letter-spacing:-0.400px;-webkit-text-stroke:0.4px #222;">9,780.00 USD</span>
<span class="t" style="left:1714.78px;top:494px;font-size:12.6px;line-height:14px;height:14px;color:#222;letter-spacing:-0.400px;-webkit-text-stroke:0.4px #222;">3,667.50 USD</span>
<span class="t" style="left:316.80px;top:534px;font-size:12.6px;line-height:14px;height:14px;color:#1783d1;letter-spacing:-0.129px;-webkit-text-stroke:0.15px #1783d1;">INV2407241009</span>
<span class="t" style="left:482.90px;top:535px;font-size:12.6px;line-height:14px;height:14px;color:#222;letter-spacing:0.150px;-webkit-text-stroke:0.4px #222;">Imperial Design Display</span>
<span class="t" style="left:661.90px;top:535px;font-size:12.6px;line-height:14px;height:14px;color:#222;letter-spacing:0.138px;-webkit-text-stroke:0.4px #222;">Ellis Equipment Rental</span>
<span class="t" style="left:881.39px;top:535px;font-size:12.6px;line-height:14px;height:14px;color:#222;letter-spacing:0.120px;">07/24/2024</span>
<span class="t" style="left:1038.19px;top:535px;font-size:12.6px;line-height:14px;height:14px;color:#222;letter-spacing:0.120px;">08/23/2024</span>
<span class="t" style="left:1197.04px;top:535px;font-size:12.6px;line-height:14px;height:14px;color:#222;letter-spacing:0.120px;">195</span>
<span class="t" style="left:1303.69px;top:535px;font-size:12.6px;line-height:14px;height:14px;color:#222;letter-spacing:0.120px;">07/25/2024</span>
<span class="t" style="left:1411.19px;top:535px;font-size:12.6px;line-height:14px;height:14px;color:#222;letter-spacing:0.120px;">07/25/2024</span>
<span class="t" style="left:1552.58px;top:535px;font-size:12.6px;line-height:14px;height:14px;color:#222;letter-spacing:-0.400px;-webkit-text-stroke:0.4px #222;">8,300.00 USD</span>
<span class="t" style="left:1714.78px;top:535px;font-size:12.6px;line-height:14px;height:14px;color:#222;letter-spacing:-0.400px;-webkit-text-stroke:0.4px #222;">7,885.00 USD</span>
<span class="t" style="left:316.80px;top:575px;font-size:12.6px;line-height:14px;height:14px;color:#1783d1;letter-spacing:-0.111px;-webkit-text-stroke:0.15px #1783d1;">INV24072410010</span>
<span class="t" style="left:482.90px;top:576px;font-size:12.6px;line-height:14px;height:14px;color:#222;letter-spacing:0.150px;-webkit-text-stroke:0.4px #222;">Imperial Design Display</span>
<span class="t" style="left:661.90px;top:576px;font-size:12.6px;line-height:14px;height:14px;color:#222;letter-spacing:0.138px;-webkit-text-stroke:0.4px #222;">Ellis Equipment Rental</span>
<span class="t" style="left:881.39px;top:576px;font-size:12.6px;line-height:14px;height:14px;color:#222;letter-spacing:0.120px;">07/24/2024</span>
<span class="t" style="left:1038.19px;top:576px;font-size:12.6px;line-height:14px;height:14px;color:#222;letter-spacing:0.120px;">08/23/2024</span>
<span class="t" style="left:1197.04px;top:576px;font-size:12.6px;line-height:14px;height:14px;color:#222;letter-spacing:0.120px;">195</span>
<span class="t" style="left:1303.69px;top:576px;font-size:12.6px;line-height:14px;height:14px;color:#222;letter-spacing:0.120px;">07/25/2024</span>
<span class="t" style="left:1411.19px;top:576px;font-size:12.6px;line-height:14px;height:14px;color:#222;letter-spacing:0.120px;">07/25/2024</span>
<span class="t" style="left:1545.97px;top:576px;font-size:12.6px;line-height:14px;height:14px;color:#222;letter-spacing:-0.400px;-webkit-text-stroke:0.4px #222;">12,050.00 USD</span>
<span class="t" style="left:1709.11px;top:576px;font-size:12.6px;line-height:14px;height:14px;color:#222;letter-spacing:-0.400px;-webkit-text-stroke:0.4px #222;">11,447.50 USD</span>
<span class="t" style="left:316.80px;top:616px;font-size:12.6px;line-height:14px;height:14px;color:#1783d1;letter-spacing:-0.017px;-webkit-text-stroke:0.15px #1783d1;">Inv2407240011</span>
<span class="t" style="left:482.90px;top:617px;font-size:12.6px;line-height:14px;height:14px;color:#222;letter-spacing:0.150px;-webkit-text-stroke:0.4px #222;">Imperial Design Display</span>
<span class="t" style="left:661.90px;top:617px;font-size:12.6px;line-height:14px;height:14px;color:#222;letter-spacing:0.278px;-webkit-text-stroke:0.4px #222;">Met Life Dental</span>
<span class="t" style="left:881.39px;top:617px;font-size:12.6px;line-height:14px;height:14px;color:#222;letter-spacing:0.120px;">07/24/2024</span>
<span class="t" style="left:1038.19px;top:617px;font-size:12.6px;line-height:14px;height:14px;color:#222;letter-spacing:0.120px;">08/23/2024</span>
<span class="t" style="left:1197.04px;top:617px;font-size:12.6px;line-height:14px;height:14px;color:#222;letter-spacing:0.120px;">195</span>
<span class="t" style="left:1303.69px;top:617px;font-size:12.6px;line-height:14px;height:14px;color:#222;letter-spacing:0.120px;">07/24/2024</span>
<span class="t" style="left:1411.19px;top:617px;font-size:12.6px;line-height:14px;height:14px;color:#222;letter-spacing:0.120px;">07/24/2024</span>
<span class="t" style="left:1552.58px;top:617px;font-size:12.6px;line-height:14px;height:14px;color:#222;letter-spacing:-0.400px;-webkit-text-stroke:0.4px #222;">4,575.00 USD</span>
<span class="t" style="left:1714.78px;top:617px;font-size:12.6px;line-height:14px;height:14px;color:#222;letter-spacing:-0.400px;-webkit-text-stroke:0.4px #222;">4,460.63 USD</span>
<span class="t" style="left:316.80px;top:657px;font-size:12.6px;line-height:14px;height:14px;color:#1783d1;letter-spacing:0.165px;-webkit-text-stroke:0.15px #1783d1;">Bldpnt22072402</span>
<span class="t" style="left:482.90px;top:658px;font-size:12.6px;line-height:14px;height:14px;color:#222;letter-spacing:0.150px;-webkit-text-stroke:0.4px #222;">Imperial Design Display</span>
<span class="t" style="left:661.90px;top:658px;font-size:12.6px;line-height:14px;height:14px;color:#222;letter-spacing:0.064px;-webkit-text-stroke:0.4px #222;">Bob&#x27;s Burger Joint</span>
<span class="t" style="left:881.39px;top:658px;font-size:12.6px;line-height:14px;height:14px;color:#222;letter-spacing:0.120px;">07/22/2024</span>
<span class="t" style="left:1038.19px;top:658px;font-size:12.6px;line-height:14px;height:14px;color:#222;letter-spacing:0.120px;">08/21/2024</span>
<span class="t" style="left:1197.04px;top:658px;font-size:12.6px;line-height:14px;height:14px;color:#222;letter-spacing:0.120px;">197</span>
<span class="t" style="left:1303.69px;top:658px;font-size:12.6px;line-height:14px;height:14px;color:#222;letter-spacing:0.120px;">07/24/2024</span>
<span class="t" style="left:1411.19px;top:658px;font-size:12.6px;line-height:14px;height:14px;color:#222;letter-spacing:0.120px;">07/24/2024</span>
<span class="t" style="left:1552.58px;top:658px;font-size:12.6px;line-height:14px;height:14px;color:#222;letter-spacing:-0.400px;-webkit-text-stroke:0.4px #222;">7,000.00 USD</span>
<span class="t" style="left:1714.78px;top:658px;font-size:12.6px;line-height:14px;height:14px;color:#222;letter-spacing:-0.400px;-webkit-text-stroke:0.4px #222;">6,895.00 USD</span>
<span class="t" style="left:316.80px;top:698px;font-size:12.6px;line-height:14px;height:14px;color:#1783d1;letter-spacing:-0.020px;-webkit-text-stroke:0.15px #1783d1;">Inv2407240010</span>
<span class="t" style="left:482.90px;top:699px;font-size:12.6px;line-height:14px;height:14px;color:#222;letter-spacing:0.150px;-webkit-text-stroke:0.4px #222;">Imperial Design Display</span>
<span class="t" style="left:661.90px;top:699px;font-size:12.6px;line-height:14px;height:14px;color:#222;letter-spacing:0.278px;-webkit-text-stroke:0.4px #222;">Met Life Dental</span>
<span class="t" style="left:881.39px;top:699px;font-size:12.6px;line-height:14px;height:14px;color:#222;letter-spacing:0.120px;">07/24/2024</span>
<span class="t" style="left:1038.19px;top:699px;font-size:12.6px;line-height:14px;height:14px;color:#222;letter-spacing:0.120px;">08/23/2024</span>
<span class="t" style="left:1197.04px;top:699px;font-size:12.6px;line-height:14px;height:14px;color:#222;letter-spacing:0.120px;">195</span>
<span class="t" style="left:1303.69px;top:699px;font-size:12.6px;line-height:14px;height:14px;color:#222;letter-spacing:0.120px;">07/24/2024</span>
<span class="t" style="left:1411.19px;top:699px;font-size:12.6px;line-height:14px;height:14px;color:#222;letter-spacing:0.120px;">07/24/2024</span>
<span class="t" style="left:1552.58px;top:699px;font-size:12.6px;line-height:14px;height:14px;color:#222;letter-spacing:-0.400px;-webkit-text-stroke:0.4px #222;">5,075.00 USD</span>
<span class="t" style="left:1714.78px;top:699px;font-size:12.6px;line-height:14px;height:14px;color:#222;letter-spacing:-0.400px;-webkit-text-stroke:0.4px #222;">4,973.50 USD</span>
<span class="t" style="left:317.00px;top:732px;font-size:12.6px;line-height:14px;height:14px;color:#222;letter-spacing:-0.278px;">Showing 1-10 of 47 result(s)</span>
<span class="t" style="left:329.00px;top:763px;font-size:9.2px;line-height:10px;height:10px;color:#333;letter-spacing:-0.025px;">Rows per page</span>
<span class="t" style="left:327.50px;top:780px;font-size:12.6px;line-height:14px;height:14px;color:#222;letter-spacing:0.484px;">10</span>
<span class="t" style="left:1597.00px;top:763px;font-size:9.2px;line-height:10px;height:10px;color:#333;letter-spacing:-0.080px;">Page 1 of 5</span>
<span class="t" style="left:1594.50px;top:780px;font-size:12.6px;line-height:14px;height:14px;color:#333;">1</span>
<span class="t" style="left:1520.70px;top:822px;font-size:11.3px;line-height:12px;height:12px;color:#222;letter-spacing:-0.593px;">PENDING PAYABLE AMOUNT</span>
<span class="t" style="left:1677.30px;top:821px;font-size:12.6px;line-height:14px;height:14px;color:#222;letter-spacing:-0.528px;-webkit-text-stroke:0.3px #222;">1,775,527.09 USD</span>
<span class="t" style="left:1692.60px;top:861px;font-size:9.8px;line-height:11px;height:11px;color:#333;font-style:italic;letter-spacing:0.628px;-webkit-text-stroke:0.3px #333;">Powered by</span>
<span class="t" style="left:1788.30px;top:859px;font-size:11.8px;line-height:14px;height:14px;color:#1a90d2;letter-spacing:0.117px;-webkit-text-stroke:0.25px #1a90d2;transform:scaleX(1.26);transform-origin:0 50%;">sky</span>
<span class="t" style="left:1810.60px;top:859px;font-size:11.8px;line-height:14px;height:14px;color:#34425f;letter-spacing:-0.093px;-webkit-text-stroke:0.25px #34425f;transform:scaleX(1.26);transform-origin:0 50%;">scend</span>
</div>
</body>
</html>
